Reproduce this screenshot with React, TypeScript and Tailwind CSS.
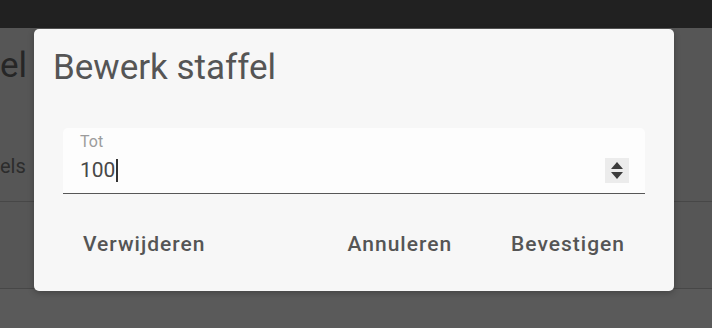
import { useState } from "react";

function Spinner() {
  return (
    <div className="flex h-[25px] w-[24px] flex-col items-center justify-center gap-[3px] bg-[#ececec]">
      <svg width="12" height="7" viewBox="0 0 12 7">
        <path d="M6 0 L12 7 L0 7 Z" fill="#3c3c3c" />
      </svg>
      <svg width="12" height="7" viewBox="0 0 12 7">
        <path d="M0 0 L12 0 L6 7 Z" fill="#3c3c3c" />
      </svg>
    </div>
  );
}

export default function App() {
  const [value] = useState("100");

  return (
    <div
      className="relative h-[328px] w-[712px] overflow-hidden bg-[#5a5a5a]"
      style={{ fontFamily: "Roboto, 'Noto Sans', sans-serif" }}
    >
      {/* page behind the backdrop */}
      <div className="h-[28px] bg-[#212121]" />
      <div className="flex h-[174px] flex-col border-b border-[#474747] bg-[#565656]">
        <div className="mt-[18px] text-[35px] leading-[40px] text-[#262626]">el</div>
        <div className="mt-[68px] text-[20px] leading-[24px] text-[#2c2c2c]">els</div>
      </div>
      <div className="h-[87px] border-b border-[#474747] bg-[#565656]" />

      {/* dialog */}
      <div className="absolute left-[34px] top-[29px] flex h-[262px] w-[640px] flex-col rounded-[5px] bg-[#f7f7f7] shadow-[0_2px_6px_rgba(0,0,0,0.25)]">
        <h2 className="ml-[19px] mt-[18px] text-[35px] font-normal leading-[42px] text-[#555555]">
          Bewerk staffel
        </h2>

        <div className="mx-[29px] mt-[39px] flex h-[66px] items-end rounded-t-[5px] border-b-[1.5px] border-[#575757] bg-[#fdfdfd] pb-[11px] pl-[17px] pr-[16px]">
          <div className="flex flex-1 flex-col">
            <span className="text-[16px] leading-[18px] text-[#9c9c9c]">Tot</span>
            <div className="mt-[7px] flex items-center text-[21px] leading-[24px] text-[#484848]">
              {value}
              <span className="ml-[1px] h-[23px] w-[1.5px] bg-[#333]" />
            </div>
          </div>
          <div className="mb-[-1px]">
            <Spinner />
          </div>
        </div>

        <div className="mt-[38px] flex items-center px-[29px] text-[21px] font-medium leading-[24px] tracking-[1px] text-[#555555]">
          <button className="px-[20px]">Verwijderen</button>
          <div className="flex-1" />
          <button className="px-[20px]">Annuleren</button>
          <button className="ml-[19px] px-[20px]">Bevestigen</button>
        </div>
      </div>
    </div>
  );
}
